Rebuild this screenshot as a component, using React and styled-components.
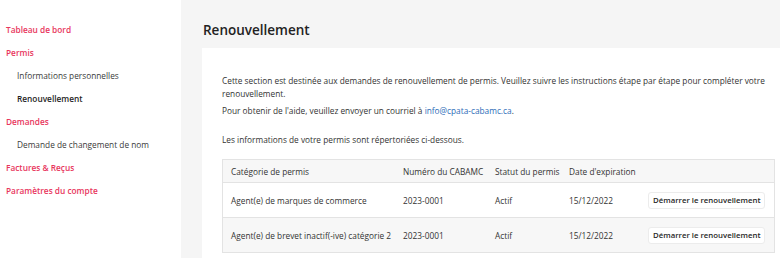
import React from 'react';
import styled, { createGlobalStyle } from 'styled-components';

const GlobalStyle = createGlobalStyle`
  html, body {
    margin: 0;
    padding: 0;
    background: #ffffff;
  }
  body {
    font-family: "Open Sans", "Liberation Sans", sans-serif;
    color: #333333;
  }
`;

const pink = '#e8365d';

const Page = styled.div`
  display: flex;
  width: 780px;
  height: 258px;
  overflow: hidden;
`;

const Sidebar = styled.nav`
  width: 181px;
  flex-shrink: 0;
  background: #ffffff;
  padding-top: 18px;
  box-sizing: border-box;
`;

const NavItem = styled.div`
  height: 23px;
  line-height: 23px;
  padding-left: ${({ sub }) => (sub ? '17px' : '6px')};
  font-size: 8.3px;
  font-weight: ${({ sub, active }) => (!sub || active ? 600 : 400)};
  color: ${({ sub, active }) => (sub ? (active ? '#1f1f1f' : '#3a3a3a') : pink)};
  white-space: nowrap;
`;

const Main = styled.main`
  flex: 1;
  background: #f5f5f5;
  padding: 21px 0 0 21px;
  display: flex;
  flex-direction: column;
`;

const Title = styled.h1`
  margin: 0 0 8px 1px;
  font-size: 13.5px;
  line-height: 19px;
  font-weight: 600;
  color: #222222;
`;

const Card = styled.section`
  flex: 1;
  background: #ffffff;
  padding: 26px 5px 0 20px;
`;

const Text = styled.p`
  margin: 0 0 ${({ gap }) => gap || 4}px 0;
  font-size: 8.3px;
  line-height: 13px;
  color: #333333;
  padding-right: 10px;
`;

const Link = styled.a`
  color: #2b6cb8;
  text-decoration: none;
`;

const Table = styled.div`
  border: 1px solid #e3e3e3;
  border-bottom: none;
`;

const Row = styled.div`
  display: grid;
  grid-template-columns: 180px 92px 74px 79px 1fr;
  align-items: center;
  height: ${({ head }) => (head ? '22px' : '34px')};
  background: ${({ shaded }) => (shaded ? '#f7f7f7' : '#ffffff')};
  border-bottom: 1px solid #e3e3e3;
`;

const Cell = styled.div`
  padding-left: ${({ first }) => (first ? '8px' : '0')};
  font-size: 8.3px;
  color: #333333;
  white-space: nowrap;
`;

const Button = styled.button`
  justify-self: start;
  height: 17px;
  padding: 0 4px;
  background: #ffffff;
  border: 1px solid #ececec;
  border-radius: 3px;
  font-family: "Open Sans", "Liberation Sans", sans-serif;
  font-size: 7.8px;
  font-weight: 600;
  color: #1f1f1f;
  cursor: pointer;
`;

const nav = [
  { label: 'Tableau de bord' },
  { label: 'Permis' },
  { label: 'Informations personnelles', sub: true },
  { label: 'Renouvellement', sub: true, active: true },
  { label: 'Demandes' },
  { label: 'Demande de changement de nom', sub: true },
  { label: 'Factures & Reçus' },
  { label: 'Paramètres du compte' },
];

const permits = [
  { category: 'Agent(e) de marques de commerce', number: '2023-0001', status: 'Actif', expiry: '15/12/2022' },
  { category: 'Agent(e) de brevet inactif(-ive) catégorie 2', number: '2023-0001', status: 'Actif', expiry: '15/12/2022' },
];

export default function App() {
  return (
    <>
      <GlobalStyle />
      <Page>
        <Sidebar>
          {nav.map((item) => (
            <NavItem key={item.label} sub={item.sub} active={item.active}>
              {item.label}
            </NavItem>
          ))}
        </Sidebar>
        <Main>
          <Title>Renouvellement</Title>
          <Card>
            <Text>
              Cette section est destinée aux demandes de renouvellement de permis. Veuillez suivre les instructions étape par étape pour compléter votre renouvellement.
            </Text>
            <Text gap={16}>
              Pour obtenir de l'aide, veuillez envoyer un courriel à <Link href="#">info@cpata-cabamc.ca</Link>.
            </Text>
            <Text gap={13}>Les informations de votre permis sont répertoriées ci-dessous.</Text>
            <Table>
              <Row head shaded>
                <Cell first>Catégorie de permis</Cell>
                <Cell>Numéro du CABAMC</Cell>
                <Cell>Statut du permis</Cell>
                <Cell>Date d'expiration</Cell>
                <Cell />
              </Row>
              {permits.map((p, i) => (
                <Row key={p.category} shaded={i % 2 === 1}>
                  <Cell first>{p.category}</Cell>
                  <Cell>{p.number}</Cell>
                  <Cell>{p.status}</Cell>
                  <Cell>{p.expiry}</Cell>
                  <Button>Démarrer le renouvellement</Button>
                </Row>
              ))}
            </Table>
          </Card>
        </Main>
      </Page>
    </>
  );
}
